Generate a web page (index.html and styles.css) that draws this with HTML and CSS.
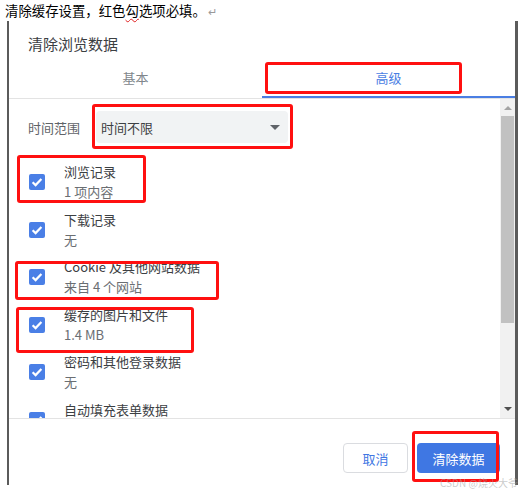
FILE: index.html
```html
<!DOCTYPE html>
<html lang="zh-CN">
<head>
    <meta charset="UTF-8">
    <title>清除浏览数据</title>
    <link rel="stylesheet" href="styles.css">
</head>
<body>
    <!-- 文档说明行 -->
    <div class="note">清除缓存设置，红色<span class="typo">勾</span>选项必填。<span class="ret">↵</span></div>

    <!-- 对话框截图 -->
    <div class="dialog">
        <div class="dialog-title">清除浏览数据</div>

        <div class="tabs">
            <div class="tab">基本</div>
            <div class="tab active">高级</div>
        </div>

        <div class="body">
            <div class="scroll-content">
                <div class="range-row">
                    <div class="range-label">时间范围</div>
                    <div class="select">
                        <span>时间不限</span>
                        <span class="caret"></span>
                    </div>
                </div>

                <div class="item">
                    <div class="checkbox"><svg viewBox="0 0 16 16"><path d="M3.6 8.2l3 2.9 5.8-6" /></svg></div>
                    <div class="item-text">
                        <div class="item-title">浏览记录</div>
                        <div class="item-sub">1 项内容</div>
                    </div>
                </div>
                <div class="item">
                    <div class="checkbox"><svg viewBox="0 0 16 16"><path d="M3.6 8.2l3 2.9 5.8-6" /></svg></div>
                    <div class="item-text">
                        <div class="item-title">下载记录</div>
                        <div class="item-sub">无</div>
                    </div>
                </div>
                <div class="item">
                    <div class="checkbox"><svg viewBox="0 0 16 16"><path d="M3.6 8.2l3 2.9 5.8-6" /></svg></div>
                    <div class="item-text">
                        <div class="item-title">Cookie 及其他网站数据</div>
                        <div class="item-sub">来自 4 个网站</div>
                    </div>
                </div>
                <div class="item">
                    <div class="checkbox"><svg viewBox="0 0 16 16"><path d="M3.6 8.2l3 2.9 5.8-6" /></svg></div>
                    <div class="item-text">
                        <div class="item-title">缓存的图片和文件</div>
                        <div class="item-sub">1.4 MB</div>
                    </div>
                </div>
                <div class="item">
                    <div class="checkbox"><svg viewBox="0 0 16 16"><path d="M3.6 8.2l3 2.9 5.8-6" /></svg></div>
                    <div class="item-text">
                        <div class="item-title">密码和其他登录数据</div>
                        <div class="item-sub">无</div>
                    </div>
                </div>
                <div class="item">
                    <div class="checkbox"><svg viewBox="0 0 16 16"><path d="M3.6 8.2l3 2.9 5.8-6" /></svg></div>
                    <div class="item-text">
                        <div class="item-title">自动填充表单数据</div>
                        <div class="item-sub"></div>
                    </div>
                </div>
            </div>

            <!-- 滚动条 -->
            <div class="scrollbar">
                <div class="arrow up"></div>
                <div class="track"><div class="thumb"></div></div>
                <div class="arrow down"></div>
            </div>
        </div>

        <div class="footer">
            <button class="btn cancel">取消</button>
            <button class="btn primary">清除数据</button>
        </div>
    </div>

    <!-- 红色标注框 -->
    <div class="mark mark-tab"></div>
    <div class="mark mark-select"></div>
    <div class="mark mark-history"></div>
    <div class="mark mark-cookie"></div>
    <div class="mark mark-cache"></div>
    <div class="mark mark-button"></div>

    <div class="watermark">CSDN @烧火大爷</div>
</body>
</html>
```

FILE: styles.css
```css
* {
    margin: 0;
    padding: 0;
    box-sizing: border-box;
}

body {
    position: relative;
    width: 521px;
    height: 492px;
    overflow: hidden;
    background: #fff;
    font-family: "Noto Sans CJK SC", "Noto Sans", sans-serif;
    color: #333;
}

.note {
    height: 21px;
    padding: 2px 0 0 5px;
    font-size: 13.4px;
    line-height: 17px;
    color: #000;
}

.typo {
    text-decoration: underline wavy #e02020;
    text-decoration-thickness: 1px;
    text-underline-offset: 2px;
}

.ret {
    color: #999;
    font-size: 11px;
    margin-left: 2px;
}

.dialog {
    margin-left: 7px;
    width: 511px;
    height: 464px;
    border-left: 2px solid #5b5b5b;
    border-right: 3px solid #5b5b5b;
    display: flex;
    flex-direction: column;
}

.dialog-title {
    height: 40px;
    padding: 13px 0 0 19px;
    font-size: 15px;
    line-height: 20px;
    color: #3c4043;
}

.tabs {
    display: flex;
    height: 38px;
    border-bottom: 1px solid #e3e3e3;
}

.tab {
    flex: 1;
    text-align: center;
    font-size: 13px;
    line-height: 34px;
    color: #80868b;
    border-bottom: 2px solid transparent;
}

.tab.active {
    color: #4a7ee3;
    border-bottom-color: #4a7ee3;
}

.body {
    display: flex;
    height: 320px;
    border-bottom: 1px solid #e3e3e3;
}

.scroll-content {
    flex: 1;
    overflow: hidden;
    padding: 12px 0 0 19px;
}

.range-row {
    display: flex;
    align-items: center;
    height: 32px;
    margin-bottom: 19px;
}

.range-label {
    width: 68px;
    font-size: 13px;
    color: #5f6368;
}

.select {
    width: 192px;
    height: 32px;
    background: #f1f3f4;
    border-radius: 4px;
    display: flex;
    align-items: center;
    justify-content: space-between;
    padding: 0 8px 0 5px;
    font-size: 13px;
    color: #3c4043;
}

.caret {
    width: 0;
    height: 0;
    border-left: 5px solid transparent;
    border-right: 5px solid transparent;
    border-top: 5px solid #5f6368;
}

.item {
    display: flex;
    align-items: center;
    height: 47.6px;
    padding-bottom: 7.6px;
}

.checkbox {
    width: 16px;
    height: 16px;
    margin-left: 1px;
    margin-right: 19px;
    border-radius: 2px;
    background: #4a7fe6;
    flex-shrink: 0;
}

.checkbox svg {
    display: block;
    width: 16px;
    height: 16px;
    fill: none;
    stroke: #fff;
    stroke-width: 2.2;
}

.item-title,
.item-sub {
    font-size: 13px;
    line-height: 20px;
    height: 20px;
}

.item-title {
    color: #3c4043;
}

.item-sub {
    color: #6a6e72;
}

.scrollbar {
    width: 15px;
    background: #f1f1f1;
    display: flex;
    flex-direction: column;
    align-items: center;
}

.arrow {
    width: 0;
    height: 0;
    border-left: 4px solid transparent;
    border-right: 4px solid transparent;
}

.arrow.up {
    margin-top: 7px;
    border-bottom: 4px solid #a3a3a3;
}

.arrow.down {
    margin-bottom: 7px;
    border-top: 4px solid #505050;
}

.track {
    flex: 1;
    width: 100%;
    padding: 6px 1px 0 1px;
}

.thumb {
    height: 207px;
    background: #c1c1c1;
}

.footer {
    flex: 1;
    display: flex;
    justify-content: flex-end;
    align-items: flex-start;
    gap: 9px;
    padding: 24px 15px 0 0;
}

.btn {
    height: 30px;
    border-radius: 4px;
    font-family: inherit;
    font-size: 13px;
}

.btn.cancel {
    width: 65px;
    background: #fff;
    border: 1px solid #dadce0;
    color: #3f77e3;
}

.btn.primary {
    width: 83px;
    background: #3f77e3;
    border: none;
    color: #fff;
}

.mark {
    position: absolute;
    border: 3px solid #ff1010;
    border-radius: 3px;
}

.mark-tab { left: 265px; top: 62px; width: 197px; height: 32px; }
.mark-select { left: 92px; top: 104px; width: 201px; height: 45px; }
.mark-history { left: 17px; top: 155px; width: 129px; height: 48px; }
.mark-cookie { left: 15px; top: 261px; width: 204px; height: 39px; }
.mark-cache { left: 16px; top: 307px; width: 178px; height: 46px; }
.mark-button { left: 412px; top: 431px; width: 87px; height: 51px; }

.watermark {
    position: absolute;
    left: 440px;
    top: 477px;
    font-size: 10px;
    line-height: 12px;
    color: rgba(160, 160, 160, 0.55);
    white-space: nowrap;
}
```
